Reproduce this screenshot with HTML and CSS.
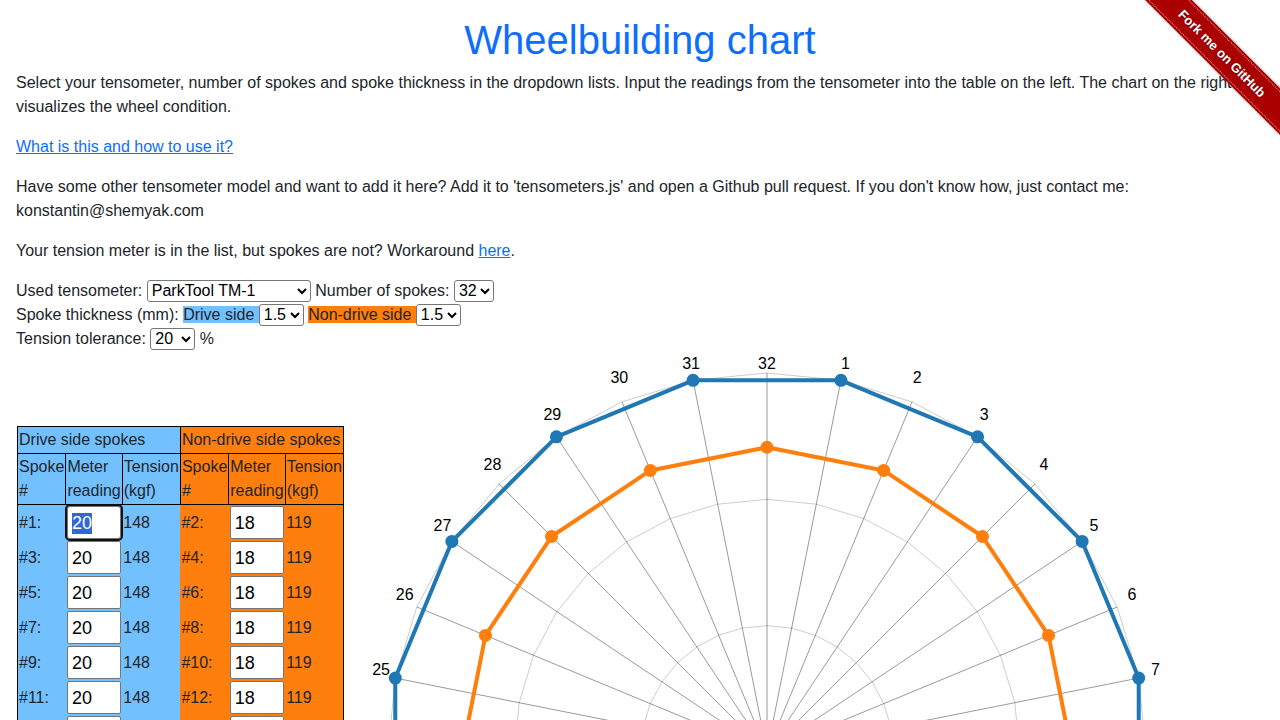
FILE: index.html
```html
<!DOCTYPE html>
<html lang="en">
<head>
<meta charset="utf-8">
<title>Wheelbuilding chart</title>
<link rel="stylesheet" href="styles.css">
</head>
<body>
<div class="ribbon"><a class="ribbon-band" href="#"><span>Fork me on GitHub</span></a></div>
<main class="page">
  <h1 class="title">Wheelbuilding chart</h1>
  <p>Select your tensometer, number of spokes and spoke thickness in the dropdown lists. Input the readings from the tensometer into the table on the left. The chart on the right visualizes the wheel condition.</p>
  <p><a href="#">What is this and how to use it?</a></p>
  <p>Have some other tensometer model and want to add it here? Add it to 'tensometers.js' and open a Github pull request. If you don't know how, just contact me: konstantin@shemyak.com</p>
  <p>Your tension meter is in the list, but spokes are not? Workaround <a href="#">here</a>.</p>
  <div class="controls">
    <div>Used tensometer: <select class="sel-meter"><option>ParkTool TM-1</option></select> Number of spokes: <select><option>32</option></select></div>
    <div>Spoke thickness (mm): <span class="ds">Drive side </span><select><option>1.5</option></select> <span class="nds">Non-drive side </span><select><option>1.5</option></select></div>
    <div>Tension tolerance: <select class="sel-tol"><option>20</option></select> %</div>
  </div>
  <div class="workspace">
    <div class="table-col">
      <table class="spokes">
        <thead>
          <tr><th colspan="3" class="ds">Drive side spokes</th><th colspan="3" class="nds">Non-drive side spokes</th></tr>
          <tr><th class="ds">Spoke #</th><th class="ds">Meter reading</th><th class="ds">Tension (kgf)</th><th class="nds">Spoke #</th><th class="nds">Meter reading</th><th class="nds">Tension (kgf)</th></tr>
        </thead>
        <tbody>
          <tr><td class="ds">#1:</td><td class="ds"><input id="first" class="reading" value="20"></td><td class="ds">148</td><td class="nds">#2:</td><td class="nds"><input class="reading" value="18"></td><td class="nds">119</td></tr>
          <tr><td class="ds">#3:</td><td class="ds"><input class="reading" value="20"></td><td class="ds">148</td><td class="nds">#4:</td><td class="nds"><input class="reading" value="18"></td><td class="nds">119</td></tr>
          <tr><td class="ds">#5:</td><td class="ds"><input class="reading" value="20"></td><td class="ds">148</td><td class="nds">#6:</td><td class="nds"><input class="reading" value="18"></td><td class="nds">119</td></tr>
          <tr><td class="ds">#7:</td><td class="ds"><input class="reading" value="20"></td><td class="ds">148</td><td class="nds">#8:</td><td class="nds"><input class="reading" value="18"></td><td class="nds">119</td></tr>
          <tr><td class="ds">#9:</td><td class="ds"><input class="reading" value="20"></td><td class="ds">148</td><td class="nds">#10:</td><td class="nds"><input class="reading" value="18"></td><td class="nds">119</td></tr>
          <tr><td class="ds">#11:</td><td class="ds"><input class="reading" value="20"></td><td class="ds">148</td><td class="nds">#12:</td><td class="nds"><input class="reading" value="18"></td><td class="nds">119</td></tr>
          <tr><td class="ds">#13:</td><td class="ds"><input class="reading" value="20"></td><td class="ds">148</td><td class="nds">#14:</td><td class="nds"><input class="reading" value="18"></td><td class="nds">119</td></tr>
          <tr><td class="ds">#15:</td><td class="ds"><input class="reading" value="20"></td><td class="ds">148</td><td class="nds">#16:</td><td class="nds"><input class="reading" value="18"></td><td class="nds">119</td></tr>
          <tr><td class="ds">#17:</td><td class="ds"><input class="reading" value="20"></td><td class="ds">148</td><td class="nds">#18:</td><td class="nds"><input class="reading" value="18"></td><td class="nds">119</td></tr>
          <tr><td class="ds">#19:</td><td class="ds"><input class="reading" value="20"></td><td class="ds">148</td><td class="nds">#20:</td><td class="nds"><input class="reading" value="18"></td><td class="nds">119</td></tr>
          <tr><td class="ds">#21:</td><td class="ds"><input class="reading" value="20"></td><td class="ds">148</td><td class="nds">#22:</td><td class="nds"><input class="reading" value="18"></td><td class="nds">119</td></tr>
          <tr><td class="ds">#23:</td><td class="ds"><input class="reading" value="20"></td><td class="ds">148</td><td class="nds">#24:</td><td class="nds"><input class="reading" value="18"></td><td class="nds">119</td></tr>
          <tr><td class="ds">#25:</td><td class="ds"><input class="reading" value="20"></td><td class="ds">148</td><td class="nds">#26:</td><td class="nds"><input class="reading" value="18"></td><td class="nds">119</td></tr>
          <tr><td class="ds">#27:</td><td class="ds"><input class="reading" value="20"></td><td class="ds">148</td><td class="nds">#28:</td><td class="nds"><input class="reading" value="18"></td><td class="nds">119</td></tr>
          <tr><td class="ds">#29:</td><td class="ds"><input class="reading" value="20"></td><td class="ds">148</td><td class="nds">#30:</td><td class="nds"><input class="reading" value="18"></td><td class="nds">119</td></tr>
          <tr><td class="ds">#31:</td><td class="ds"><input class="reading" value="20"></td><td class="ds">148</td><td class="nds">#32:</td><td class="nds"><input class="reading" value="18"></td><td class="nds">119</td></tr>
        </tbody>
      </table>
    </div>
    <svg id="chart" class="chart" width="840" height="840" viewBox="0 0 840 840" xmlns="http://www.w3.org/2000/svg"></svg>
  </div>
</main>
<script src="chart.js"></script>
</body>
</html>
```

FILE: styles.css
```css
html { scrollbar-width: none; }
html::-webkit-scrollbar { display: none; }
body {
  margin: 0;
  font-family: "Liberation Sans", Arial, sans-serif;
  font-size: 16px;
  line-height: 24px;
  color: #212529;
  background: #fff;
}
.page {
  padding: 0 16px;
}
.title {
  margin: 16px 0 7px;
  font-size: 40px;
  line-height: 48px;
  font-weight: 400;
  text-align: center;
  color: #0d6efd;
}
p {
  margin: 0 0 16px;
}
a {
  color: #0d6efd;
  text-decoration: underline;
}
.controls select {
  font-family: inherit;
  font-size: 16px;
  color: #000;
  background: #fff;
  border: 1px solid #767676;
  border-radius: 3px;
  height: 22px;
  vertical-align: baseline;
}
.sel-meter { width: 164px; }
.controls .sel-tol { width: 45px; }
.ds { background: #73c0ff; }
.nds { background: #ff7f0e; }

.workspace {
  display: flex;
  align-items: flex-start;
}
.table-col {
  width: 330px;
  flex: none;
  padding-top: 75px;
  padding-left: 1px;
}
.spokes {
  border-collapse: collapse;
  width: min-content;
  border: 1px solid #000;
}
.spokes th {
  font-weight: 400;
  text-align: left;
  vertical-align: top;
  padding: 1px;
  border: 1px solid #000;
}
.spokes td {
  padding: 1px;
  vertical-align: middle;
  white-space: nowrap;
}
.reading {
  box-sizing: border-box;
  width: 54px;
  height: 33px;
  margin: 0;
  padding: 2px 4px 0;
  font-family: "Liberation Sans", Arial, sans-serif;
  font-size: 18px;
  color: #000;
  background: #fff;
  border: 1px solid #767676;
  border-radius: 2px;
  display: block;
}
.reading::selection {
  background: #3367d6;
  color: #fff;
}
.reading:focus {
  outline: 2px solid #101010;
  outline-offset: 0;
  border-radius: 3px;
}
.chart {
  display: block;
  flex: none;
}
.chart .lbl {
  font-family: "Liberation Sans", Arial, sans-serif;
  font-size: 16px;
  fill: #000;
}

.ribbon {
  position: absolute;
  top: 0;
  right: 0;
  width: 200px;
  height: 200px;
  overflow: hidden;
  z-index: 5;
}
.ribbon-band {
  position: absolute;
  left: -8px;
  top: 37px;
  width: 300px;
  padding: 2px 0;
  background: #a00;
  transform: rotate(45deg);
  text-decoration: none;
  box-shadow: 0 0 3px rgba(0,0,0,.35);
}
.ribbon-band span {
  display: block;
  border-top: 1px dotted rgba(255,255,255,.6);
  border-bottom: 1px dotted rgba(255,255,255,.6);
  line-height: 27px;
  text-align: center;
  font-family: "Liberation Sans", Arial, sans-serif;
  font-weight: 700;
  font-size: 13px;
  color: #fff;
  text-shadow: 0 0 2px rgba(0,0,0,.5);
}
```

FILE: chart.js
```js
(function () {
  var svg = document.getElementById('chart');
  var NS = 'http://www.w3.org/2000/svg';
  var cx = 420, cy = 401, R = 379, n = 32, maxT = 148;
  function el(name, attrs, parent) {
    var e = document.createElementNS(NS, name);
    for (var k in attrs) e.setAttribute(k, attrs[k]);
    (parent || svg).appendChild(e);
    return e;
  }
  function pt(k, r) {
    var a = (k % n) / n * 2 * Math.PI;
    return [cx + r * Math.sin(a), cy - r * Math.cos(a)];
  }
  // grid polygons
  [R / 3, 2 * R / 3, R].forEach(function (r) {
    var pts = [];
    for (var k = 0; k < n; k++) pts.push(pt(k, r).map(function (v) { return v.toFixed(2); }).join(','));
    el('polygon', { points: pts.join(' '), fill: 'none', stroke: 'rgba(0,0,0,0.2)', 'stroke-width': 1 });
  });
  // angle lines
  for (var k = 0; k < n; k++) {
    var p = pt(k, R);
    el('line', { x1: cx, y1: cy, x2: p[0].toFixed(2), y2: p[1].toFixed(2), stroke: 'rgba(0,0,0,0.5)', 'stroke-width': 0.8 });
  }
  // labels
  for (var s = 1; s <= n; s++) {
    var a = (s % n) / n * 2 * Math.PI;
    var sn = Math.sin(a), cs = Math.cos(a);
    var yc;
    if (cs >= 0) { yc = cy - 401 * cs - 4.5; if (yc < 12) yc = 12; }
    else { yc = cy - 401 * cs + 4.5; }
    var f = (379 + 13 * sn * sn) * Math.abs(sn);
    var x, anchor;
    if (Math.abs(sn) < 1e-6) { x = cx; anchor = 'middle'; }
    else if (sn > 0) { x = cx + f; anchor = 'start'; }
    else { x = cx - f + 7; anchor = 'end'; }
    var t = el('text', { x: x.toFixed(1), y: (yc + 5.8).toFixed(1), 'text-anchor': anchor, 'class': 'lbl' });
    t.textContent = String(s);
  }
  function series(start, tension, color) {
    var r = R * tension / maxT;
    var pts = [];
    for (var s = start; s <= n; s += 2) pts.push(pt(s, r));
    el('polygon', { points: pts.map(function (q) { return q[0].toFixed(2) + ',' + q[1].toFixed(2); }).join(' '), fill: 'none', stroke: color, 'stroke-width': 4, 'stroke-linejoin': 'round' });
    pts.forEach(function (q) {
      el('circle', { cx: q[0].toFixed(2), cy: q[1].toFixed(2), r: 6.5, fill: color });
    });
  }
  series(2, 119, '#ff7f0e');
  series(1, 148, '#1f77b4');

  var first = document.getElementById('first');
  first.focus();
  first.select();
})();
```
